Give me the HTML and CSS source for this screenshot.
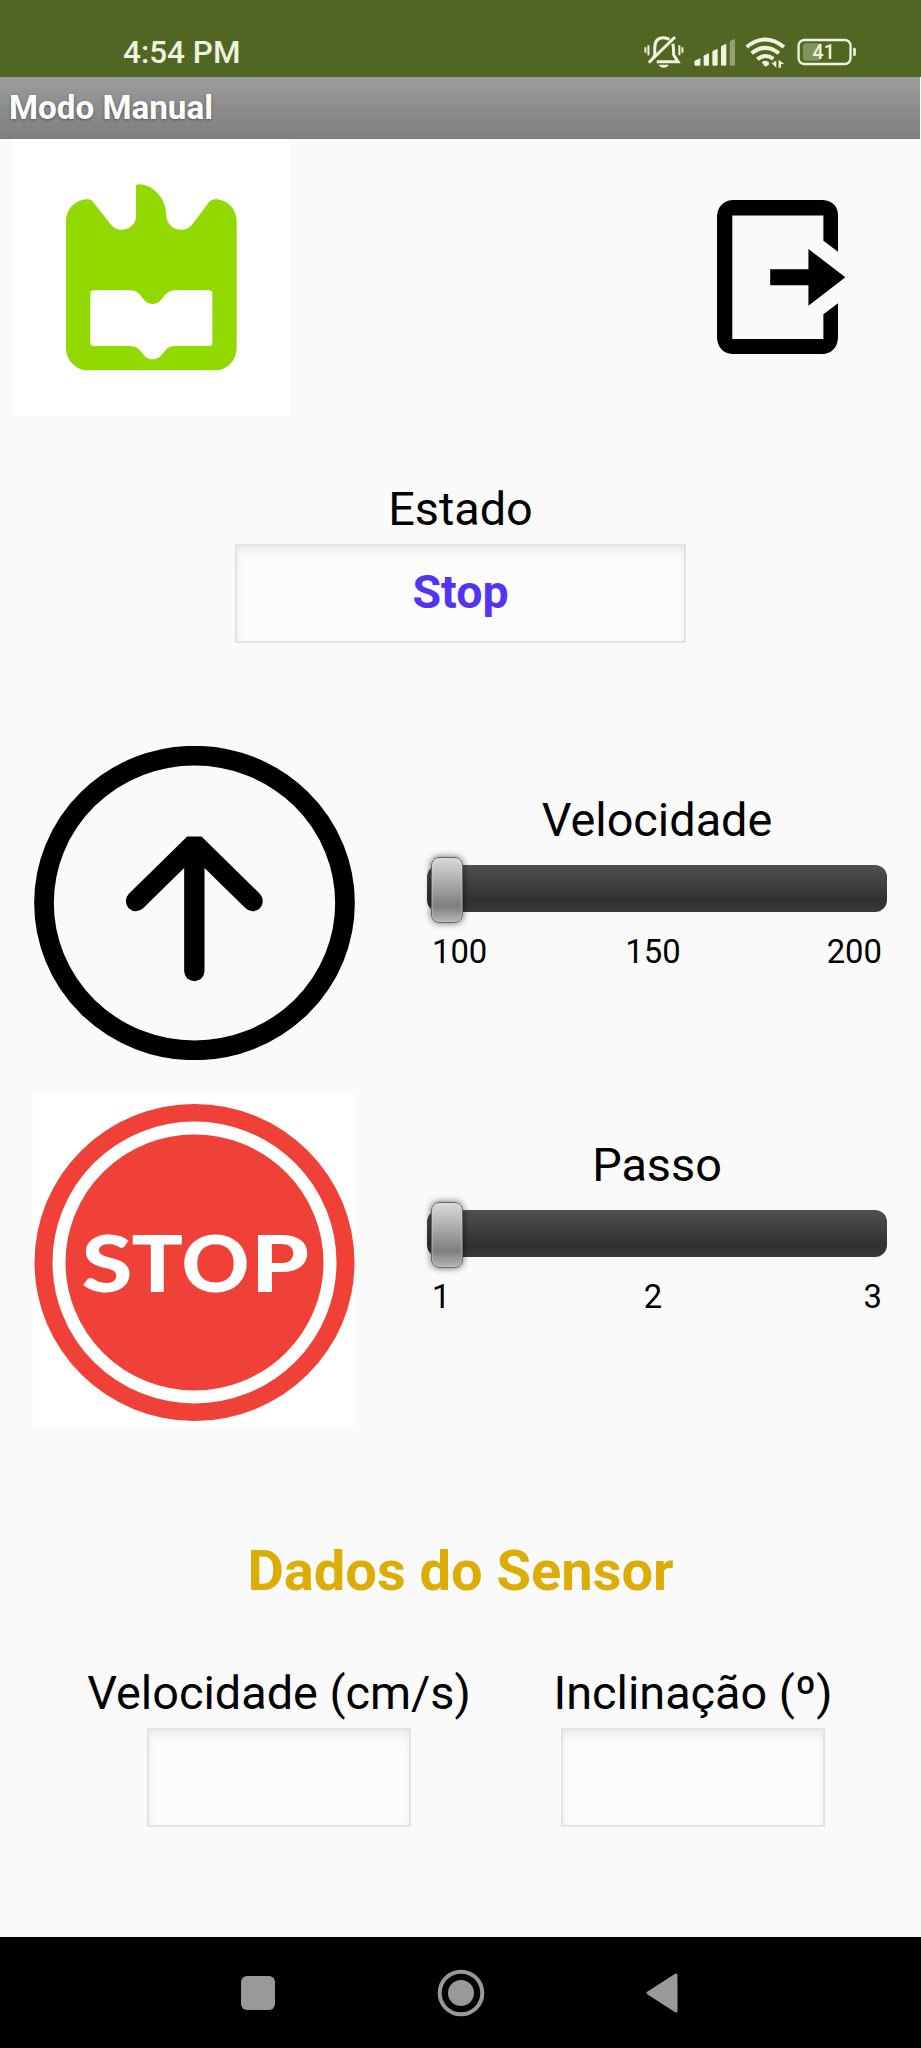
FILE: index.html
```html
<!DOCTYPE html>
<html lang="pt">
<head>
<meta charset="utf-8">
<title>Modo Manual</title>
<link rel="stylesheet" href="styles.css">
</head>
<body>
<div class="screen">
  <header class="status">
    <span class="clock">4:54 PM</span>
    <svg class="status-icons" viewBox="0 0 640 100" aria-hidden="true">
      <g fill="none" stroke="#edf3de" stroke-width="7" stroke-linecap="butt">
        <path d="M4 40V56M13 34V64M106 34V64M115 40V56" stroke-width="6"/>
        <path d="M26 74L32 65V42C32 20 42 11 58 11C66 11 72 13 76 17" stroke-width="9"/>
        <path d="M86 29C89 37 88 49 89 63L102 83H38" stroke-width="9"/>
        <path d="M14 86L93 9" stroke-width="9"/>
      </g>
      <path d="M44 92H74C70 104 48 104 44 92Z" fill="#edf3de"/>
      <g fill="#edf3de">
        <path d="M151 91V84Q151 80 156 78L169 73V92Q169 95 165 95H155Q151 95 151 91Z"/>
        <path d="M179 67Q179 64 184 62L195 58V92Q195 95 191 95H183Q179 95 179 92Z"/>
        <path d="M205 54Q205 51 210 49L221 44V92Q221 95 217 95H209Q205 95 205 92Z"/>
        <path d="M231 40Q231 36 236 34L247 29V92Q247 95 243 95H235Q231 95 231 92Z"/>
        <path d="M257 25Q257 21 262 19L273 15V92Q273 95 269 95H261Q257 95 257 92Z" opacity=".42"/>
      </g>
      <g fill="none" stroke="#edf3de" stroke-width="12">
        <path d="M308 39Q364 -6 420 39"/>
        <path d="M323 58Q364 25 405 58"/>
        <path d="M340 76Q364 57 388 75"/>
      </g>
      <path d="M353 85Q364 76 375 85V92L364 98Z" fill="#edf3de"/>
      <path d="M390 82H397V101L382 86H390ZM404 97V77L421 90H411V101H404Z" fill="#edf3de"/>
      <rect x="464" y="18" width="156" height="72" rx="17" fill="none" stroke="#edf3de" stroke-width="7"/>
      <path d="M486 28H529V80H486Q477 80 477 71V37Q477 28 486 28Z" fill="#edf3de" opacity=".32"/>
      <path d="M628 41H632Q636 41 636 46V61Q636 66 632 66H628Z" fill="#edf3de"/>
      <text class="battery-level" x="506" y="76">41</text>
    </svg>
  </header>

  <h1 class="title-bar">Modo Manual</h1>

  <main class="content">
    <div class="top-row">
      <svg class="logo" viewBox="38 26 831 831" aria-label="Logo">
        <path fill="#fff" d="M38 26H869V857H38Z"/>
        <path fill="#91d900" d="M197 275C197 235 226 207 262 207Q273 207 280 217L325 274C337 290 348 298 364 298C386 298 407 281 407 259V169Q407 162 415 162C458 163 498 203 498 257C499 281 518 298 542 298C559 298 570 291 582 274L626 216Q633 207 644 207C680 207 709 235 709 275V652C709 692 679 720 643 720H265C227 720 197 690 197 652Z"/>
        <path fill="#fff" d="M270 489Q270 480 279 480H388C428 480 423 521 457 521C491 521 486 480 526 480H627Q636 480 636 489V638Q636 647 627 647H526C486 647 491 687 457 687C423 687 428 647 388 647H279Q270 647 270 638Z"/>
      </svg>
      <svg class="exit" viewBox="0 0 388 464" aria-label="Sair">
        <path d="M46 0H318Q364 5 364 48V155L320 122V46H46V418H320V343L364 310V416Q359 459 318 463H46Q5 459 0 416V46Q5 5 46 0Z"/>
        <path d="M160 208H275V147L386 232L275 318V256H160Z"/>
      </svg>
    </div>

    <section class="state">
      <div class="label">Estado</div>
      <div class="field state-value">Stop</div>
    </section>

    <section class="control forward">
      <svg class="arrow" viewBox="0 0 963 942" preserveAspectRatio="none" fill="none" stroke="#000" aria-label="Avançar">
        <ellipse cx="481.500" cy="471" rx="451.500" ry="442" stroke-width="59"/>
        <path d="M481 314V675" stroke-width="61" stroke-linecap="round"/>
        <path d="M306 465L481 293L656 465" stroke-width="61" stroke-linecap="round" stroke-linejoin="bevel"/>
      </svg>
      <div class="slider-group">
        <div class="label">Velocidade</div>
        <div class="track"><div class="thumb"></div></div>
        <div class="scale"><span>100</span><span class="middle">150</span><span>200</span></div>
      </div>
    </section>

    <section class="control halt">
      <svg class="stop" viewBox="0 0 322 333" aria-label="Stop">
        <path fill="#fff" d="M0 0H322V333H0Z"/>
        <ellipse cx="161.500" cy="167.500" rx="160" ry="158.500" fill="#f04138"/>
        <ellipse cx="161.500" cy="167.500" rx="135.500" ry="134.500" fill="none" stroke="#fff" stroke-width="13"/>
        <g class="stop-text">
          <text x="48.500" y="196.500" textLength="51" lengthAdjust="spacingAndGlyphs">S</text>
          <text x="98.500" y="196.500" textLength="51.500" lengthAdjust="spacingAndGlyphs">T</text>
          <text x="148.500" y="196.500" textLength="68" lengthAdjust="spacingAndGlyphs">O</text>
          <text x="218" y="196.500" textLength="58" lengthAdjust="spacingAndGlyphs">P</text>
        </g>
      </svg>
      <div class="slider-group">
        <div class="label">Passo</div>
        <div class="track"><div class="thumb"></div></div>
        <div class="scale"><span>1</span><span class="middle">2</span><span>3</span></div>
      </div>
    </section>

    <h2 class="sensor-title">Dados do Sensor</h2>
    <section class="sensors">
      <div class="sensor speed">
        <div class="label">Velocidade (cm/s)</div>
        <div class="field"></div>
      </div>
      <div class="sensor tilt">
        <div class="label">Inclinação (º)</div>
        <div class="field"></div>
      </div>
    </section>
  </main>

  <nav class="nav-bar">
    <svg viewBox="0 0 34 34" class="recent"><rect width="34" height="34" rx="6" fill="#999"/></svg>
    <svg viewBox="0 0 48 48" class="home"><circle cx="24" cy="24" r="21.300" fill="none" stroke="#999" stroke-width="4"/><circle cx="24" cy="24" r="13" fill="#999"/></svg>
    <svg viewBox="0 0 32 40" class="back"><path d="M2 20L30 2V38Z" fill="#999" stroke="#999" stroke-width="3" stroke-linejoin="round"/></svg>
  </nav>
</div>
</body>
</html>
```

FILE: styles.css
```css
* { box-sizing: border-box; }
body { margin: 0; background: #fafafa; font-family: Roboto, "Liberation Sans", sans-serif; color: #000; }
svg { display: block; flex: none; }
.screen { width: 921px; height: 2048px; display: flex; flex-direction: column; overflow: hidden; background: #fafafa; }

.status { height: 77px; background: #526623; display: flex; align-items: flex-start; justify-content: space-between; padding: 34px 64px 0 123px; }
.clock { font-size: 31.500px; line-height: 38px; font-weight: 500; color: #edf3de; }
.status-icons { width: 213.300px; height: 33.300px; overflow: visible; }
.battery-level { font-family: Roboto, sans-serif; font-size: 59px; font-weight: 500; fill: #edf3de; }

.title-bar { width: 920px; height: 62px; margin: 0; padding: 0 9px; font-size: 33.200px; line-height: 62px; font-weight: 700; color: #fff; background: linear-gradient(#9c9c9c, #7e7e7e); text-shadow: 0 1px 3px rgba(0,0,0,.4); }

.content { height: 1798px; display: flex; flex-direction: column; }
.top-row { display: flex; justify-content: space-between; align-items: flex-start; height: 342px; padding: 0 75px 0 12.500px; }
.logo { width: 277px; height: 277px; }
.exit { width: 129px; height: 154.500px; margin-top: 60.500px; }

.label { font-size: 46.800px; line-height: 56px; text-align: center; white-space: nowrap; }
.field { height: 99px; border: 2px solid #e3e3e3; background: #fcfcfc; box-shadow: inset 0 7px 12px -3px rgba(0,0,0,.07), inset 0 0 8px rgba(0,0,0,.025); }
.state { width: 451px; height: 265px; margin-left: 235px; }
.state .field { margin-top: 7px; }
.state-value { font-size: 46.500px; line-height: 92px; font-weight: 700; text-align: center; color: #5434f0; }

.control { display: flex; justify-content: space-between; align-items: flex-start; padding: 0 34px; }
.forward { height: 349px; }
.arrow { width: 321px; height: 314px; }
.slider-group { width: 460px; }
.forward .slider-group { padding-top: 46px; }
.halt { height: 433px; padding-left: 33px; }
.halt .slider-group { padding-top: 42px; }
.stop { width: 322px; height: 333px; }
.stop-text { font-family: Lato, sans-serif; font-size: 79px; font-weight: 900; fill: #fff; }
.track { height: 47px; margin-top: 17px; border-radius: 12px; background: linear-gradient(#505050, #30322f 75%, #3a3a39); display: flex; align-items: center; padding-left: 4px; }
.thumb { flex: none; width: 32px; height: 66px; margin-top: 2px; border: 1.500px solid #686868; border-radius: 8px; background: linear-gradient(#dadada, #7e7e7e 75%, #b5b5b5); box-shadow: inset 0 0 2px #ddd, 0 0 7px rgba(0,0,0,.6); }
.scale { display: flex; justify-content: space-between; margin-top: 20px; padding: 0 5px; font-size: 32.800px; line-height: 40px; }
.middle { padding-right: 8px; }

.sensor-title { margin: 0; height: 137px; padding-top: 10px; font-size: 56px; line-height: 66px; font-weight: 700; text-align: center; color: #ddad07; }
.sensors { display: flex; }
.sensor { display: flex; flex-direction: column; align-items: center; width: 384px; }
.speed { margin-left: 87px; }
.tilt { margin-left: 30px; }
.sensor .field { width: 264px; margin-top: 7px; }

.nav-bar { height: 111px; background: #000; display: flex; align-items: center; justify-content: space-between; padding: 0 243px 0 241px; }
.recent { width: 34px; height: 34px; }
.home { width: 48px; height: 48px; }
.back { width: 32px; height: 40px; }
```
